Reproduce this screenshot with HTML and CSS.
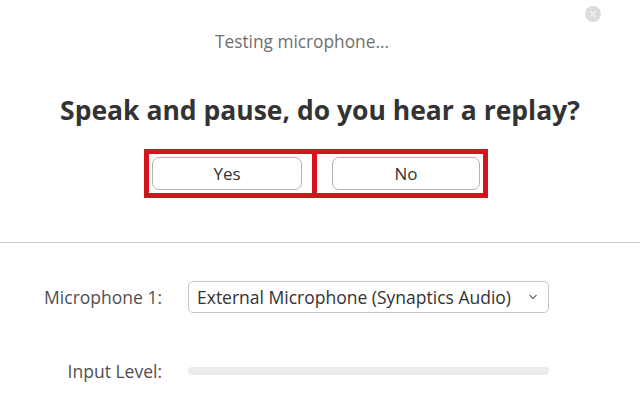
FILE: index.html
```html
<!DOCTYPE html>
<html>
<head>
<meta charset="utf-8">
<link rel="stylesheet" href="styles.css">
</head>
<body>
<div class="dialog">
  <button class="close" aria-label="Close">
    <svg width="16" height="16" viewBox="0 0 16 16"><circle cx="8" cy="8" r="8" fill="#dcdcdc"/><path d="M5.5 5.5l5 5M10.5 5.5l-5 5" stroke="#f4f4f4" stroke-width="1.4" stroke-linecap="round"/></svg>
  </button>
  <div class="title">Testing microphone...</div>
  <h1 class="heading">Speak and pause, do you hear a replay?</h1>
  <div class="choices">
    <div class="cell cell-yes"><button class="btn">Yes</button></div>
    <div class="cell cell-no"><button class="btn">No</button></div>
  </div>
  <hr class="divider">
  <div class="form">
    <div class="label">Microphone 1:</div>
    <div class="select">
      <span class="select-text">External Microphone (Synaptics Audio)</span>
      <svg class="chev" width="10" height="6" viewBox="0 0 10 6"><path d="M1.5 1l3.5 3.5L8.5 1" fill="none" stroke="#777" stroke-width="1.3"/></svg>
    </div>
    <div class="label">Input Level:</div>
    <div class="level"><div class="level-track"></div></div>
  </div>
</div>
</body>
</html>
```
FILE: styles.css
```css
* { box-sizing: border-box; }
html, body { margin: 0; padding: 0; background: #fff; }
body { font-family: "Open Sans", "Noto Sans", sans-serif; width: 640px; height: 420px; overflow: hidden; }
.dialog { position: relative; width: 640px; height: 420px; padding-top: 32px; }
.close { position: absolute; left: 585px; top: 6px; width: 16px; height: 16px; padding: 0; border: 0; background: none; display: block; }
.close svg { display: block; }
.title { height: 20px; line-height: 20px; text-align: center; font-size: 17.3px; color: #707070; padding-right: 36px; }
.heading { margin: 42px 0 0; height: 32px; line-height: 32px; text-align: center; font-size: 26.5px; font-weight: 700; color: #333; padding-left: 0; letter-spacing: 0; }
.choices { margin: 23px 0 0 144px; width: 344px; height: 49px; display: flex; border: 5px solid #d6121c; }
.cell { height: 39px; display: flex; align-items: center; }
.cell-yes { width: 168px; border-right: 5px solid #d6121c; padding-left: 3px; }
.cell-no { flex: 1; padding-left: 15px; }
.btn { width: 150px; height: 33px; border: 1px solid #b4b4b4; border-radius: 7px; background: #fff; font-family: inherit; font-size: 17px; color: #333; padding: 0; }
.cell-no .btn { width: 148px; }
.divider { margin: 44px 0 0; border: 0; height: 1px; background: #c9c9c9; }
.form { margin-top: 38px; display: grid; grid-template-columns: 162px 361px; grid-template-rows: 32px 24px; column-gap: 26px; row-gap: 46px; align-items: center; }
.label { text-align: right; font-size: 17.5px; color: #505050; }
.select { height: 32px; border: 1px solid #c6c6c6; border-radius: 5px; display: flex; align-items: center; padding: 0 10px 0 8px; }
.select-text { flex: 1; font-size: 17.5px; color: #333; white-space: nowrap; }
.chev { display: block; }
.level { display: flex; align-items: center; height: 24px; }
.level-track { width: 100%; height: 8px; border-radius: 4px; background: #ebebeb; }
```
